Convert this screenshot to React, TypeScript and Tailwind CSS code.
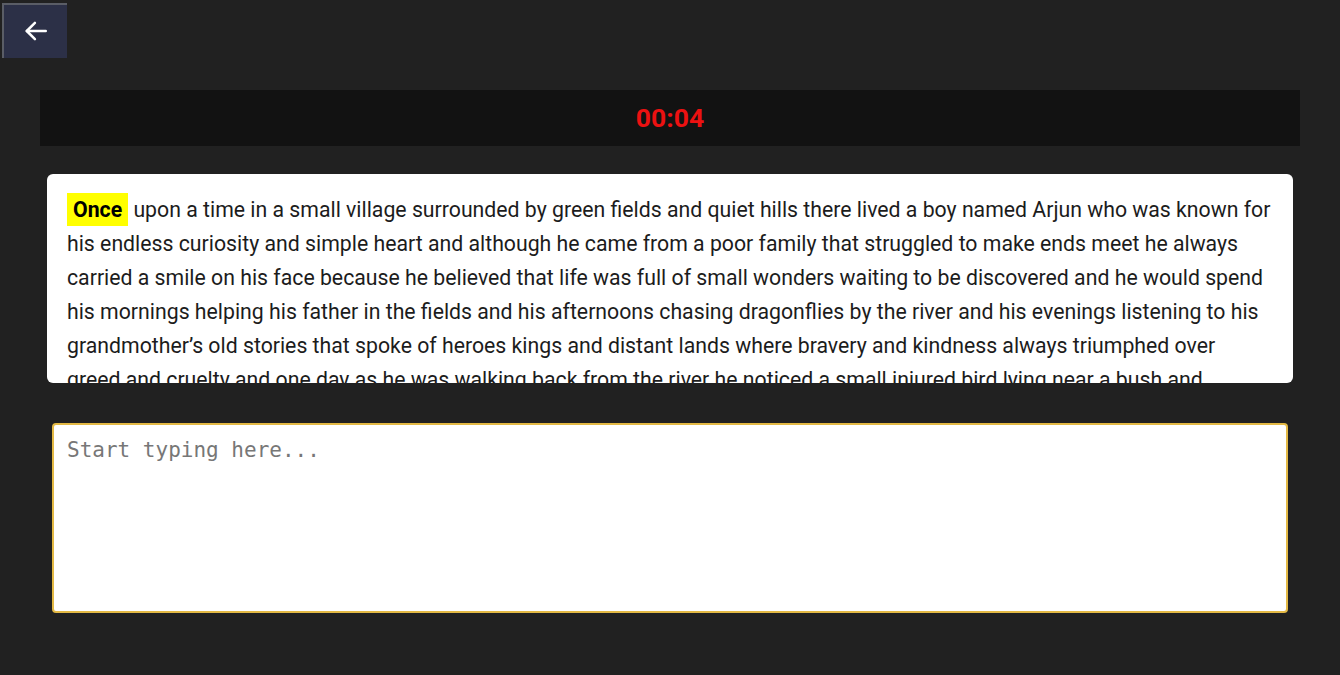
import React, { useState } from 'react';

const story =
  "upon a time in a small village surrounded by green fields and quiet hills there lived a boy named Arjun who was known for his endless curiosity and simple heart and although he came from a poor family that struggled to make ends meet he always carried a smile on his face because he believed that life was full of small wonders waiting to be discovered and he would spend his mornings helping his father in the fields and his afternoons chasing dragonflies by the river and his evenings listening to his grandmother\u2019s old stories that spoke of heroes kings and distant lands where bravery and kindness always triumphed over greed and cruelty and one day as he was walking back from the river he noticed a small injured bird lying near a bush and immediately he knelt down and gently picked it up and carried it home where he cared for it day and night until it was strong enough to fly again";

const App = () => {
  const [typed, setTyped] = useState('');

  return (
    <div className="min-h-screen w-full bg-[#212121] font-['Roboto',sans-serif]">
      {/* Back button */}
      <div className="pt-[3px] pl-[2px]">
        <button className="flex h-[55px] w-[65px] items-start justify-center border-t-2 border-l-2 border-[#5a5d66] bg-[#2c3047] pt-[13px] text-white">
          <svg width="26" height="26" viewBox="0 0 24 24" fill="none" stroke="currentColor" strokeWidth="2.3" strokeLinecap="round" strokeLinejoin="round">
            <path d="M21 12H3.5" />
            <path d="M11 4.5L3.5 12l7.5 7.5" />
          </svg>
        </button>
      </div>

      <div className="px-10 pt-[32px]">
        {/* Timer */}
        <div className="flex h-[56px] items-center justify-center bg-[#121212]">
          <span className="text-[26.5px] font-bold text-[#ec1111]">00:04</span>
        </div>

        {/* Passage */}
        <div className="mx-[7px] mt-[28px] h-[209px] overflow-hidden rounded-md bg-white px-5 pt-[19px]">
          <p className="text-[21.25px] leading-[34px] text-[#1c1c1c]">
            <span className="bg-[#ffff00] px-[6px] py-[4px] font-bold text-black">Once</span>{' '}
            {story}
          </p>
        </div>

        {/* Input */}
        <div className="mx-[12px] mt-[40px]">
          <textarea
            autoFocus
            value={typed}
            onChange={(e) => setTyped(e.target.value)}
            placeholder="Start typing here..."
            className="block h-[190px] w-full resize-none rounded-[4px] border-2 border-[#e3b945] bg-white px-[13px] py-[11px] font-['DejaVu_Sans_Mono',monospace] text-[21px] leading-[28px] text-[#222] placeholder-[#777777] outline-none"
          />
        </div>
      </div>
    </div>
  );
};

export default App;
